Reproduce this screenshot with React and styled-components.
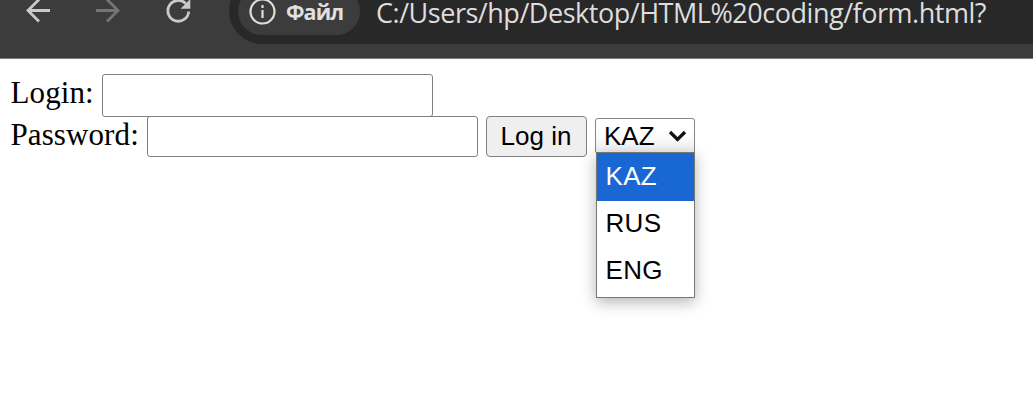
import React from "react";
import styled, { createGlobalStyle } from "styled-components";

const GlobalStyle = createGlobalStyle`
  * { box-sizing: border-box; }
  html, body { margin: 0; background: #fff; overflow: hidden; }
`;

const Window = styled.div`
  width: 1033px;
  height: 400px;
  overflow: hidden;
  background: #fff;
`;

const Toolbar = styled.header`
  display: flex;
  align-items: center;
  height: 59px;
  padding: 0 0 36px 25px;
  overflow: hidden;
  background: #3c3c3c;
  border-bottom: 1px solid #7f7f7f;
`;

const NavIcon = styled.svg`
  flex: none;
  width: 26px;
  height: 28px;
  margin-right: ${(p) => p.$gap}px;
  fill: none;
  stroke: ${(p) => (p.$dim ? "#757575" : "#c9c9c9")};
  stroke-width: 2.8;
`;

const AddressBar = styled.div`
  display: flex;
  flex: none;
  align-items: center;
  width: 860px;
  height: 66px;
  padding-left: 9px;
  border-radius: 33px;
  background: #282828;
`;

const SchemeChip = styled.div`
  display: flex;
  flex: none;
  align-items: center;
  width: 122px;
  height: 47px;
  padding-left: 11px;
  border-radius: 24px;
  background: #3c3c3c;
  color: #e0e0e0;
  font: 700 21.5px/30px "Open Sans", sans-serif;
`;

const InfoIcon = styled.svg`
  flex: none;
  width: 27px;
  height: 27px;
  margin-right: 10px;
  fill: none;
  stroke: #dedede;
  stroke-width: 2.2;
`;

const ChipLabel = styled.span`
  padding-top: 1px;
  letter-spacing: -0.9px;
`;

const Url = styled.span`
  margin-left: 16px;
  padding-top: 4px;
  color: #dedede;
  font: 400 27px/36px "Open Sans", sans-serif;
  letter-spacing: -0.47px;
  white-space: nowrap;
`;

const Page = styled.form`
  padding: 15px 0 0 10.5px;
`;

const Row = styled.div`
  display: flex;
  align-items: flex-start;
  height: 42px;
`;

const Label = styled.label`
  width: ${(p) => p.$width}px;
  color: #000;
  font: 31px/38px "Liberation Serif", serif;
  letter-spacing: 0.1px;
  white-space: nowrap;
`;

const Field = styled.input`
  width: 331px;
  height: ${(p) => p.$height}px;
  margin: 0;
  padding: 2px 4px;
  border: 1.5px solid #808080;
  border-radius: 3px;
  outline: none;
  background: #fff;
`;

const SubmitButton = styled.button`
  width: 101px;
  height: 41px;
  margin: 0 0 0 8px;
  padding: 0 0 2px;
  border: 1.5px solid #808080;
  border-radius: 4px;
  background: #efefef;
  color: #000;
  font: 26px/34px "Liberation Sans", sans-serif;
`;

const Select = styled.div`
  position: relative;
  width: 100px;
  height: 36px;
  margin: 2px 0 0 8px;
`;

const SelectValue = styled.div`
  display: flex;
  align-items: center;
  justify-content: space-between;
  height: 36px;
  padding: 0 7px 1px 8.5px;
  border: 1px solid #858585;
  border-radius: 3px;
  background: linear-gradient(#fff 35%, #f0f0f0);
  color: #000;
  font: 26px/30px "Liberation Sans", sans-serif;
`;

const Chevron = styled.svg`
  width: 19px;
  height: 14px;
  margin-top: 1px;
  fill: none;
  stroke: #111;
  stroke-width: 3.2;
`;

const Menu = styled.div`
  position: absolute;
  top: 34px;
  left: 1px;
  width: 99px;
  height: 146px;
  border: 1.5px solid #777;
  background: #fff;
  box-shadow: 0 4px 14px rgba(0, 0, 0, 0.3);
`;

const Option = styled.div`
  height: ${(p) => (p.$selected ? 48 : 47)}px;
  padding-left: 9px;
  background: ${(p) => (p.$selected ? "#1967d2" : "#fff")};
  color: ${(p) => (p.$selected ? "#fff" : "#000")};
  font: 26px/${(p) => (p.$selected ? 47 : 45)}px "Liberation Sans", sans-serif;
  letter-spacing: 0.3px;
`;

export default function App() {
  return (
    <Window>
      <GlobalStyle />
      <Toolbar>
        <NavIcon viewBox="0 0 26 28" $gap={44}>
          <path d="M25 13.5H3M14 2.5l-11 11 11 11" />
        </NavIcon>
        <NavIcon viewBox="0 0 26 28" $gap={44} $dim>
          <path d="M1 13.5h22M12 2.5l11 11-11 11" />
        </NavIcon>
        <NavIcon viewBox="0 0 26 28" $gap={38}>
          <path d="M23.7 14.5A10.4 10.4 0 1 1 20.8 6.6" />
          <path d="M25.3 2v9.7h-9.7z" fill="#c9c9c9" stroke="none" />
        </NavIcon>
        <AddressBar>
          <SchemeChip>
            <InfoIcon viewBox="0 0 27 27">
              <circle cx="13.5" cy="13.5" r="12" />
              <path d="M13.5 12v8M13.5 7v3" />
            </InfoIcon>
            <ChipLabel>Файл</ChipLabel>
          </SchemeChip>
          <Url>C:/Users/hp/Desktop/HTML%20coding/form.html?</Url>
        </AddressBar>
      </Toolbar>
      <Page>
        <Row>
          <Label htmlFor="login" $width={91}>Login:</Label>
          <Field id="login" $height={43} />
        </Row>
        <Row>
          <Label htmlFor="password" $width={136}>Password:</Label>
          <Field id="password" type="password" $height={41} />
          <SubmitButton type="button">Log in</SubmitButton>
          <Select>
            <SelectValue>
              KAZ
              <Chevron viewBox="0 0 19 14">
                <path d="M2 3l7.5 7.5L17 3" />
              </Chevron>
            </SelectValue>
            <Menu>
              <Option $selected>KAZ</Option>
              <Option>RUS</Option>
              <Option>ENG</Option>
            </Menu>
          </Select>
        </Row>
      </Page>
    </Window>
  );
}
